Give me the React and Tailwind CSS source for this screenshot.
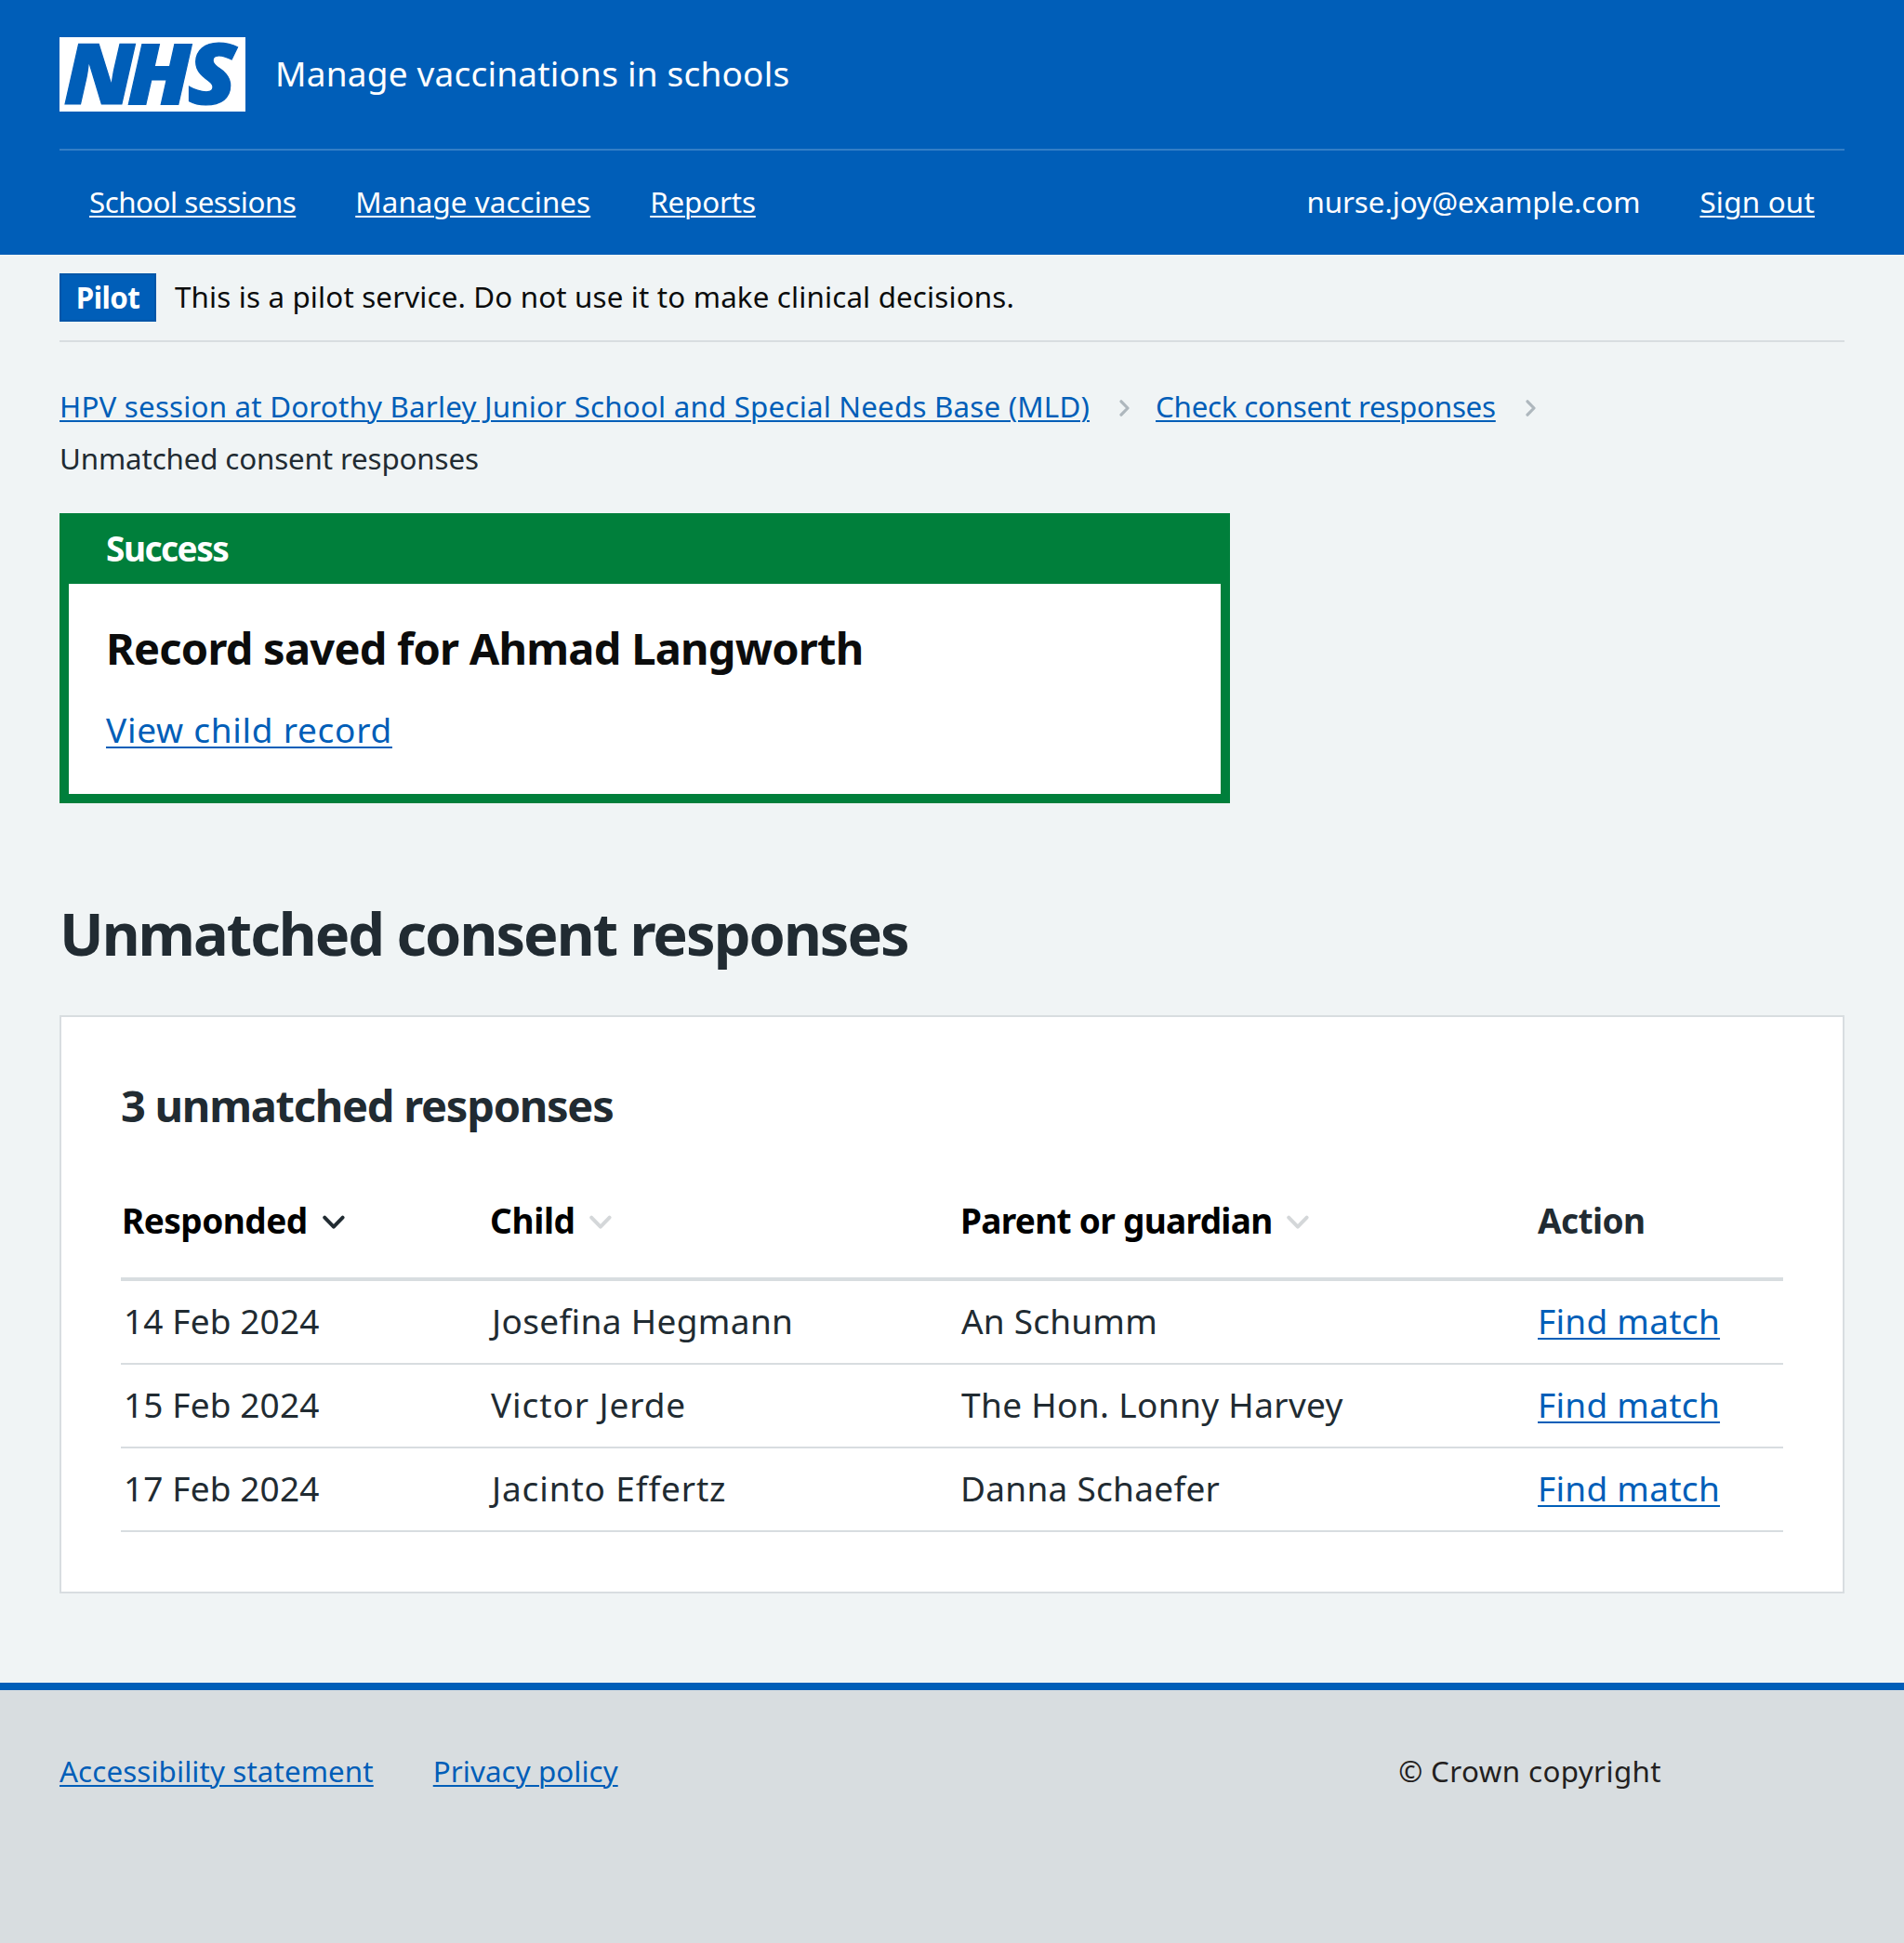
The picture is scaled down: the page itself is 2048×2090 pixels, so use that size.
const rows = [
  { date: "14 Feb 2024", child: "Josefina Hegmann", childStyle: "pl-[2px] tracking-[0.35px]", parent: "An Schumm", parentStyle: "pl-px tracking-[0.2px]" },
  { date: "15 Feb 2024", child: "Victor Jerde", childStyle: "pl-px tracking-[0.9px]", parent: "The Hon. Lonny Harvey", parentStyle: "pl-px tracking-[0.35px]" },
  { date: "17 Feb 2024", child: "Jacinto Effertz", childStyle: "pl-[2px] tracking-[0.87px]", parent: "Danna Schaefer", parentStyle: "tracking-[0.27px]" },
];

const columns = "grid grid-cols-[397px_506px_621px_264px] items-center";

function NhsLogo() {
  return (
    <svg width="200" height="80" viewBox="0 0 200 80" role="img" aria-label="NHS" className="block shrink-0 bg-white">
      <text x="4.2 68 128.6" y="72.2" transform="scale(1.07 1)" fontSize="90.5" fill="#005eb8" stroke="#005eb8" strokeWidth="1.2" className="font-['Noto_Sans',sans-serif] font-black italic">NHS</text>
    </svg>
  );
}

function BreadcrumbChevron() {
  return (
    <svg width="11" height="18" viewBox="0 0 11 18" fill="none" stroke="#aeb7bd" strokeWidth="3.2" strokeLinecap="round" strokeLinejoin="round" className="block shrink-0">
      <path d="M2 1.8 9 9 2 16.2" />
    </svg>
  );
}

function SortChevron({ active }) {
  return (
    <svg width="24" height="16" viewBox="0 0 24 16" fill="none" strokeWidth="3.9" strokeLinecap="round" strokeLinejoin="round" className={active ? "mt-1 block stroke-[#212b32]" : "mt-1 block stroke-[#d4d7d9]"}>
      <path d="M2.2 2.6 11.9 12.6 21.6 2.6" />
    </svg>
  );
}

function Link({ className = "", children }) {
  return <a href="#" className={`underline decoration-2 whitespace-nowrap ${className}`}>{children}</a>;
}

export default function App() {
  return (
    <div className="flex min-h-[2090px] w-full flex-col bg-[#f0f4f5] font-['Noto_Sans',sans-serif] text-[37px] text-[#212b32]">
      <header className="bg-[#005eb8] px-16 text-white">
        <div className="flex h-40 items-center gap-8">
          <NhsLogo />
          <span className="pb-[3px] leading-[56px] tracking-[0.2px]">Manage vaccinations in schools</span>
        </div>
        <nav className="flex h-[114px] items-center justify-between border-t-2 border-[#337ec6] px-8 pb-[2px] text-[31.3px] leading-[48px]">
          <div className="flex gap-16">
            <Link className="tracking-[-0.49px] underline-offset-[3px]">School sessions</Link>
            <Link className="tracking-[0.1px] underline-offset-[3px]">Manage vaccines</Link>
            <Link className="tracking-[-0.14px] underline-offset-[3px]">Reports</Link>
          </div>
          <div className="flex gap-16">
            <span className="tracking-[-0.05px]">nurse.joy@example.com</span>
            <Link className="tracking-[0.25px] underline-offset-[3px]">Sign out</Link>
          </div>
        </nav>
      </header>

      <main className="px-16">
        <div className="flex items-center gap-5 border-b-2 border-[#d8dde0] py-5 text-[31.3px]">
          <strong className="flex h-[52px] w-[104px] items-center justify-center border-2 border-[#0056a8] bg-[#005eb8] tracking-[-0.6px] text-white">Pilot</strong>
          <span className="pb-[2px] leading-[48px] tracking-[0.16px] text-[#0b0c0c]">This is a pilot service. Do not use it to make clinical decisions.</span>
        </div>

        <nav className="pt-[41px] text-[31.3px] leading-[56px]">
          <div className="flex items-center">
            <Link className="tracking-[0.2px] text-[#005eb8] underline-offset-[3px]">HPV session at Dorothy Barley Junior School and Special Needs Base (MLD)</Link>
            <span className="pt-[4px] pr-7 pl-8"><BreadcrumbChevron /></span>
            <Link className="tracking-[-0.25px] text-[#005eb8] underline-offset-[3px]">Check consent responses</Link>
            <span className="pt-[4px] pl-8"><BreadcrumbChevron /></span>
          </div>
          <div className="tracking-[-0.14px]">Unmatched consent responses</div>
        </nav>

        <section className="mt-[31px] w-[1259px] border-x-10 border-b-10 border-[#007f3b] bg-white">
          <h2 className="flex h-[76px] items-center bg-[#007f3b] px-10 font-bold tracking-[-1.5px] text-white">Success</h2>
          <div className="h-[226px] px-10 pt-[41px]">
            <h3 className="text-[47px] leading-[56px] font-bold tracking-[-0.77px] text-[#0b0c0c]">Record saved for Ahmad Langworth</h3>
            <p className="mt-8 leading-[56px]">
              <Link className="tracking-[0.73px] text-[#005eb8] underline-offset-4">View child record</Link>
            </p>
          </div>
        </section>

        <h1 className="mt-[104px] text-[63px] leading-[72px] font-bold tracking-[-1.98px]">Unmatched consent responses</h1>

        <section className="mt-[52px] border-2 border-[#d8dde0] bg-white px-16 pt-[67px] pb-16">
          <h2 className="text-[47px] leading-[56px] font-bold tracking-[-1.26px]">3 unmatched responses</h2>
          <div className={`${columns} h-[161px] border-b-4 border-[#d8dde0] pt-[34px] leading-[56px] font-bold text-black`}>
            <div className="flex items-center gap-4 pl-px"><span className="tracking-[-0.52px]">Responded</span><SortChevron active /></div>
            <div className="flex items-center gap-[15px]"><span className="tracking-[-0.32px]">Child</span><SortChevron /></div>
            <div className="flex items-center gap-[15px]"><span className="tracking-[-0.7px]">Parent or guardian</span><SortChevron /></div>
            <div className="tracking-[-0.6px] text-[#212b32]">Action</div>
          </div>
          {rows.map((row) => (
            <div key={row.date} className={`${columns} h-[90px] border-b-2 border-[#d8dde0] pb-[3px] leading-[56px]`}>
              <div className="pl-[3px] tracking-[0.13px]">{row.date}</div>
              <div className={row.childStyle}>{row.child}</div>
              <div className={row.parentStyle}>{row.parent}</div>
              <div><Link className="tracking-[0.27px] text-[#005eb8] underline-offset-4">Find match</Link></div>
            </div>
          ))}
        </section>
      </main>

      <footer className="mt-24 flex grow border-t-8 border-[#005eb8] bg-[#d8dde0] px-16 pt-[63px] text-[31.3px] leading-[48px]">
        <Link className="tracking-[0.12px] text-[#005eb8] underline-offset-[3px]">Accessibility statement</Link>
        <Link className="ml-16 tracking-[0.08px] text-[#005eb8] underline-offset-[3px]">Privacy policy</Link>
        <span className="mr-[197px] ml-auto tracking-[0.4px] text-[#231f20]">© Crown copyright</span>
      </footer>
    </div>
  );
}
